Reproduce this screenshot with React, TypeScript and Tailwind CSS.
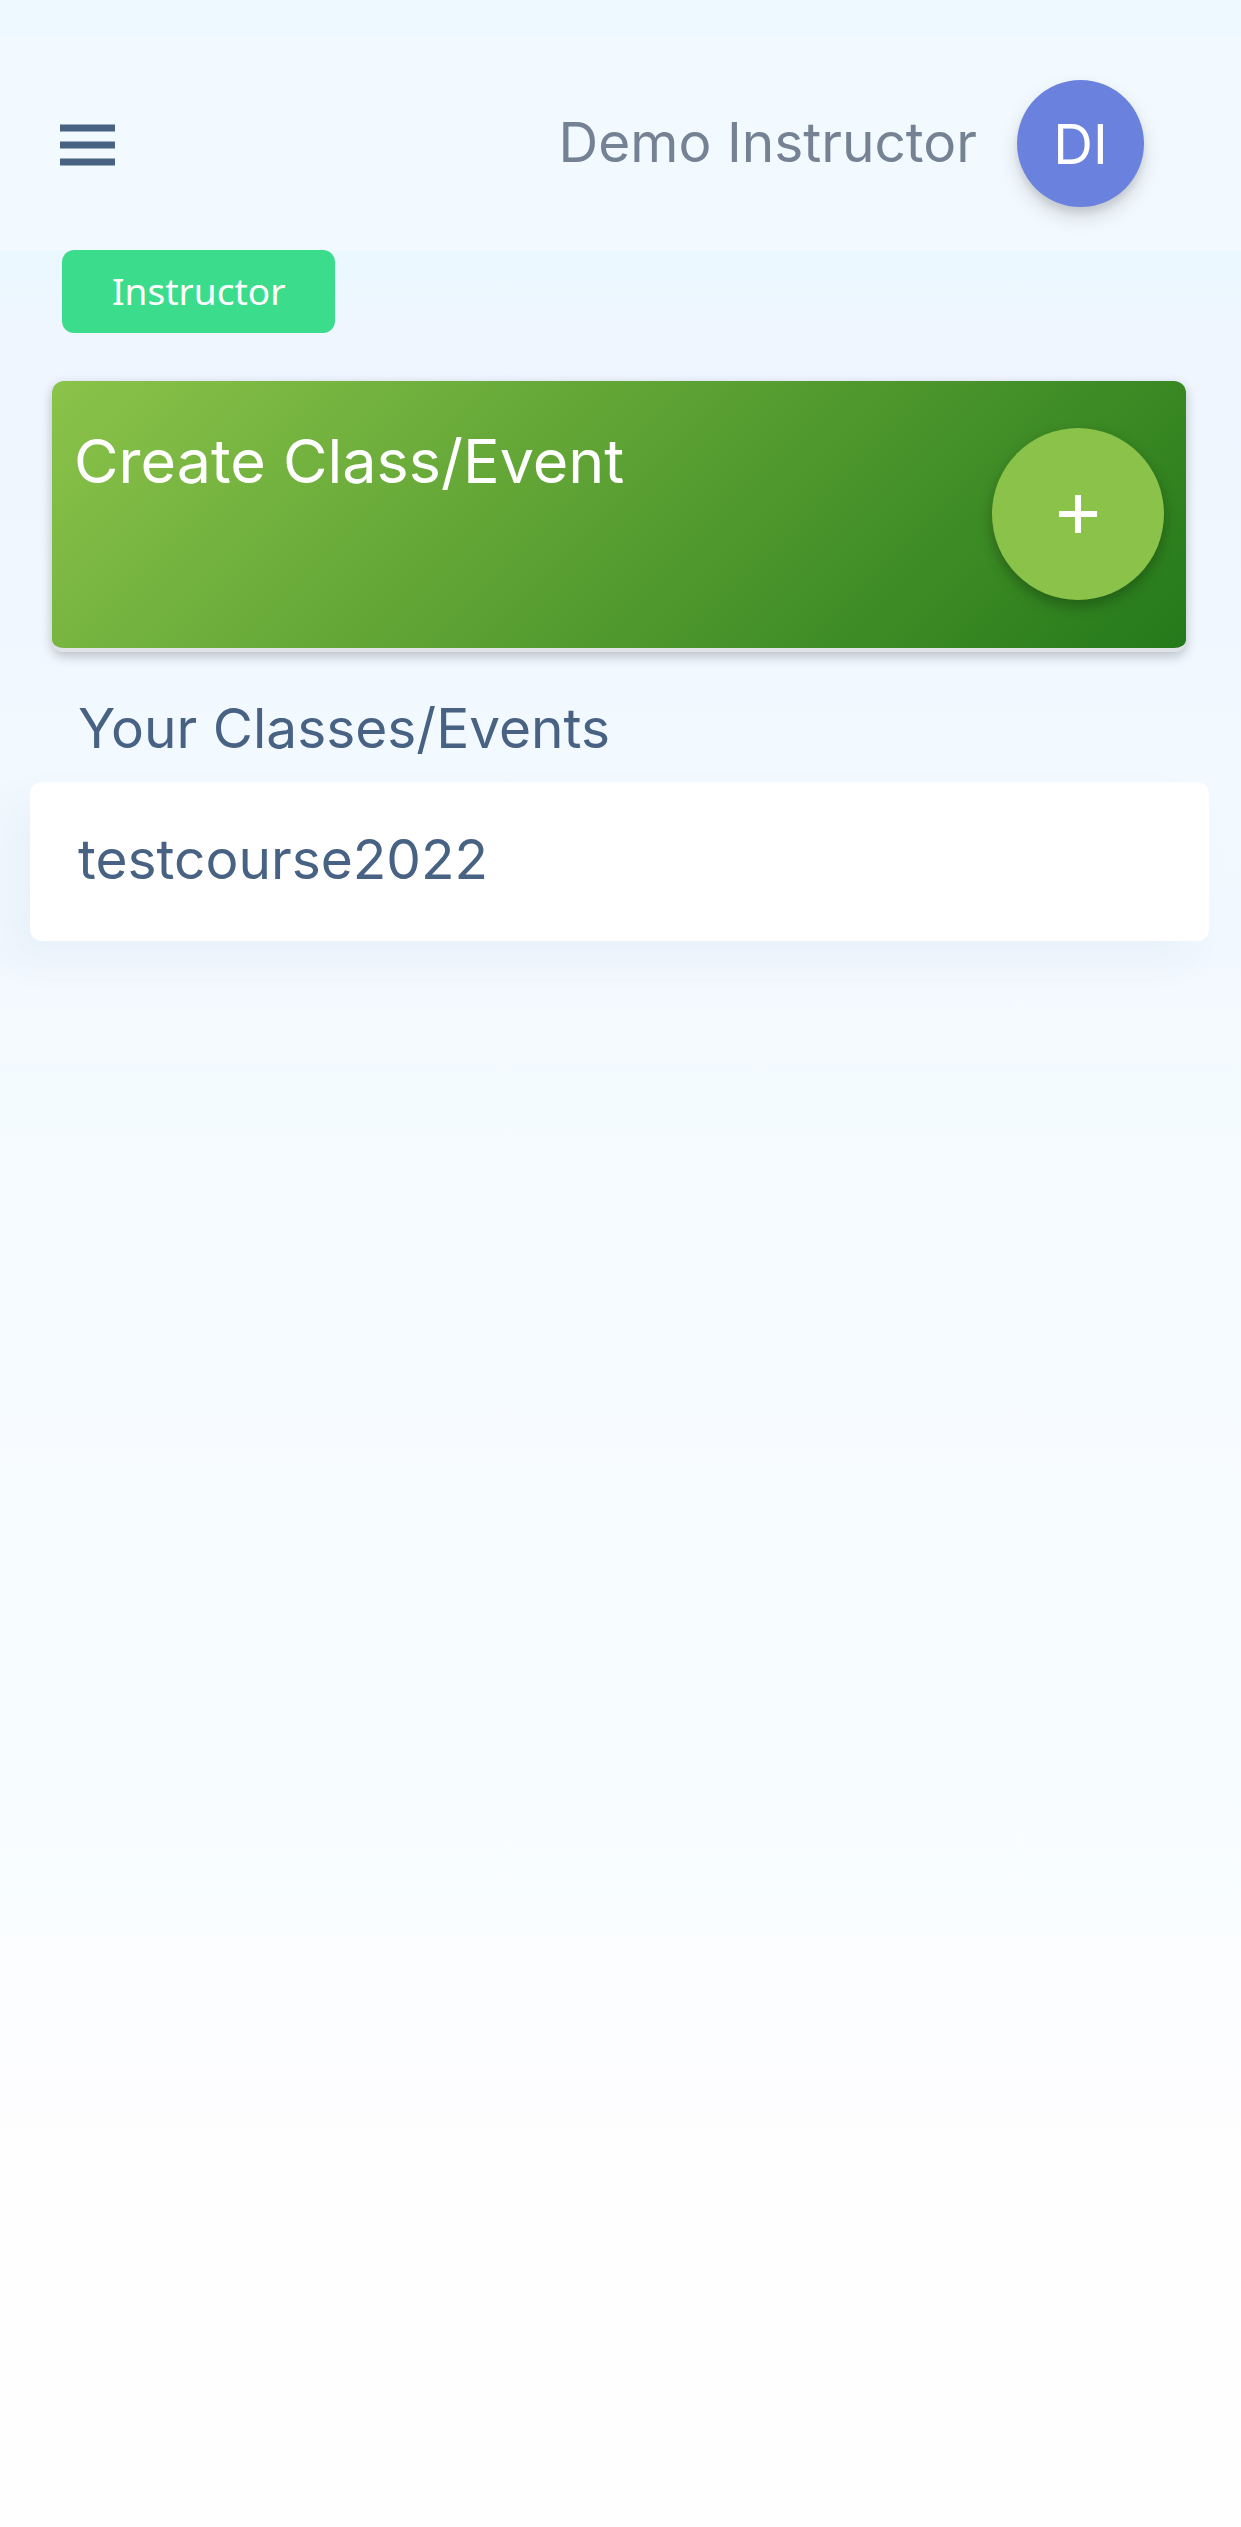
const courses = ["testcourse2022"];

function MenuIcon() {
  return (
    <svg viewBox="0 0 55 42" className="h-[42px] w-[55px]" fill="currentColor" aria-hidden="true">
      <rect x="0" y="0.5" width="55" height="7" />
      <rect x="0" y="17.5" width="55" height="7" />
      <rect x="0" y="34.5" width="55" height="7" />
    </svg>
  );
}

function PlusIcon() {
  return (
    <svg viewBox="0 0 38 38" className="size-[38px]" fill="currentColor" aria-hidden="true">
      <path d="M16 0h6v16h16v6H22v16h-6V22H0v-6h16z" />
    </svg>
  );
}

export default function App() {
  return (
    <div className="min-h-screen bg-[linear-gradient(180deg,#edf9ff_0%,#ecf8ff_11%,#eff6ff_13%,#f0f7ff_24%,#f2f9ff_30%,#f1f8ff_38%,#f4f9ff_39%,#f3fbfe_44%,#f6fbff_46%,#f7fbff_57%,#f7fcff_60%,#f9fdff_76%,#fcfdff_77%,#fdfdff_83%,#fefefe_85%,#fefefe_100%)] pt-9 font-['Inter',sans-serif] text-[#476282]">
      <header className="flex h-[214px] items-start justify-between bg-[#f2f9ff] pl-15 pr-[97px] pt-11">
        <button type="button" aria-label="Open menu" className="mt-11">
          <MenuIcon />
        </button>
        <div className="flex items-center gap-10">
          <span className="pb-1 text-[55px] leading-[64px] text-[#748294]">Demo Instructor</span>
          <button
            type="button"
            aria-label="Account"
            className="flex size-[127px] items-center justify-center rounded-full bg-[#6a82de] text-[55px] leading-[64px] text-white shadow-[0_10px_20px_rgba(0,0,0,0.14),0_6px_6px_rgba(0,0,0,0.08)]"
          >
            DI
          </button>
        </div>
      </header>

      <main>
        <span className="ml-[62px] inline-flex h-[83px] items-center rounded-xl bg-[#3bdd8c] px-[50px] pb-[2px] align-top font-['Noto_Sans',sans-serif] text-[37px] leading-[48px] text-white">
          Instructor
        </span>

        <section className="mr-[55px] ml-[52px] mt-12 flex h-[271px] items-start justify-between rounded-xl border-b-4 border-[#dfe3e8] bg-[linear-gradient(135deg,#8bc34a_0%,#539b2f_55%,#24791a_100%)] bg-origin-border px-[22px] shadow-[0_4px_12px_rgba(0,0,0,0.24)]">
          <h2 className="mt-[42px] text-[61px] leading-[76px] text-white">Create Class/Event</h2>
          <button
            type="button"
            aria-label="Create class or event"
            className="mt-[47px] flex size-[172px] shrink-0 items-center justify-center rounded-full bg-[#8bc34a] text-white shadow-[0_6px_14px_rgba(0,0,0,0.28)]"
          >
            <PlusIcon />
          </button>
        </section>

        <h2 className="ml-[78px] mt-11 text-[55px] leading-[64px]">Your Classes/Events</h2>
        <ul className="ml-[30px] mr-[32px] mt-[22px]">
          {courses.map((name) => (
            <li key={name}>
              <a
                href="#course"
                className="block rounded-xl bg-white pb-[50px] pl-12 pt-[45px] text-[55px] leading-[64px] shadow-[-20px_20px_40px_rgba(71,98,130,0.05)]"
              >
                {name}
              </a>
            </li>
          ))}
        </ul>
      </main>
    </div>
  );
}
